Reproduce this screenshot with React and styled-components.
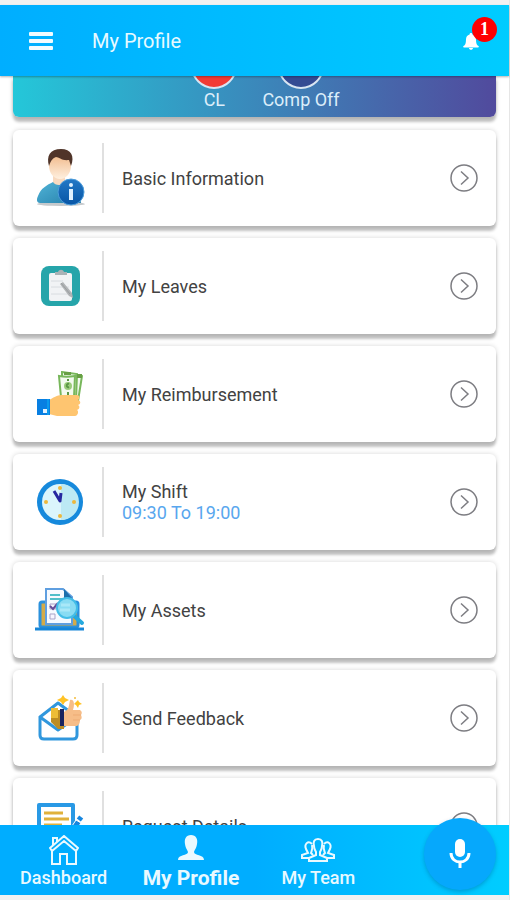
import React from "react";
import styled, { createGlobalStyle, css } from "styled-components";

const GlobalStyle = createGlobalStyle`
  *, *::before, *::after { box-sizing: border-box; }
  body {
    margin: 0;
    background: #f1f1f1;
    color: #424242;
    font-family: Roboto, "Liberation Sans", sans-serif;
  }
  button { font: inherit; color: inherit; border: 0; padding: 0; background: none; cursor: pointer; }
`;

const Screen = styled.div`
  display: flex;
  flex-direction: column;
  height: 100vh;
  padding: 5px 0;
  border-right: 1px solid #e6e6e6;
`;

const Header = styled.header`
  position: relative;
  z-index: 1;
  display: flex;
  align-items: center;
  flex: none;
  height: 71px;
  padding: 0 30px 0 28px;
  background: linear-gradient(90deg, #00aeff, #00ccff);
  box-shadow: 0 1px 2px rgba(0, 0, 0, 0.3);
  color: #e8faff;
`;

const IconButton = styled.button`
  position: relative;
  display: flex;
  svg { display: block; }
`;

const Title = styled.h1`
  flex: 1;
  margin: 0 0 0 38px;
  font-size: 20px;
  line-height: 24px;
  font-weight: 400;
`;

const Badge = styled.span`
  position: absolute;
  left: 9px;
  bottom: 8px;
  width: 25px;
  height: 25px;
  border-radius: 50%;
  background: #ff0000;
  color: #fff;
  font: bold 18px/24px "Liberation Serif", serif;
  text-align: center;
`;

const Content = styled.main`
  flex: 1;
  min-height: 0;
  overflow: hidden;
  padding: 0 13px;
  background: #fff;
`;

const cardShadow = css`
  box-shadow: 0 5px 3px rgba(0, 0, 0, 0.24), 0 0 5px rgba(0, 0, 0, 0.16);
`;

const BalanceCard = styled.section`
  display: flex;
  align-items: flex-end;
  justify-content: center;
  gap: 25px;
  height: 41px;
  margin-bottom: 13px;
  padding: 0 0 6px 22px;
  overflow: hidden;
  border-radius: 0 0 6px 6px;
  background: linear-gradient(90deg, #24c7d9, #514a9d);
  ${cardShadow}
`;

const Balance = styled.div`
  display: flex;
  flex-direction: column;
  align-items: center;
  flex: none;
  color: #dceefa;
  font-size: 18px;
  line-height: 22px;
`;

const BalanceDisc = styled.span`
  width: 46px;
  height: 46px;
  border: 2px solid #d9e5f2;
  border-radius: 50%;
  background: ${({ $tone }) => $tone};
`;

const BalanceLabel = styled.span`
  white-space: nowrap;
`;

const List = styled.ul`
  display: flex;
  flex-direction: column;
  gap: 12px;
  margin: 0;
  padding: 0;
  list-style: none;
`;

const RowCard = styled.button`
  display: flex;
  align-items: center;
  width: 100%;
  height: 96px;
  padding-right: 18px;
  border-radius: 6px;
  background: #fff;
  text-align: left;
  ${cardShadow}
`;

const RowIcon = styled.span`
  display: flex;
  justify-content: center;
  align-items: center;
  flex: none;
  width: 91px;
  height: 70px;
  padding-left: 4px;
  border-right: 2px solid #e0e0e0;
`;

const RowText = styled.span`
  flex: 1;
  padding-left: 18px;
  font-size: 18px;
  line-height: 21px;
`;

const RowDetail = styled.span`
  display: block;
  color: #58a6ee;
`;

const Footer = styled.footer`
  position: relative;
  display: flex;
  flex: none;
  height: 70px;
  padding-right: 127px;
  background: linear-gradient(90deg, #00adff 50%, #00cdff);
`;

const Nav = styled.nav`
  display: grid;
  grid-template-columns: repeat(3, 1fr);
  flex: 1;
`;

const NavLink = styled.a`
  display: flex;
  flex-direction: column;
  align-items: center;
  justify-content: flex-end;
  padding-bottom: 6px;
  color: #e9f9ff;
  font-size: ${({ $active }) => ($active ? 21 : 18)}px;
  font-weight: ${({ $active }) => ($active ? 700 : 500)};
  line-height: 22px;
  text-decoration: none;
  white-space: nowrap;
`;

const NavIcon = styled.span`
  display: flex;
  align-items: center;
  height: 34px;
`;

const MicButton = styled.button`
  position: absolute;
  right: 13px;
  bottom: 5px;
  display: flex;
  align-items: center;
  justify-content: center;
  width: 72px;
  height: 72px;
  border-radius: 50%;
  background: #06a8fc;
  box-shadow: 0 2px 4px rgba(0, 60, 120, 0.3);
  color: #fff;
`;

const MenuIcon = () => (
  <svg width="26" height="18" viewBox="0 0 26 18" fill="#f2fcff" aria-hidden="true">
    <rect x="1" y="0" width="24" height="4" rx="1" />
    <rect x="1" y="7" width="24" height="4" rx="1" />
    <rect x="1" y="14" width="24" height="4" rx="1" />
  </svg>
);

const BellIcon = () => (
  <svg width="16" height="19" viewBox="0 -2 16 19" fill="#fff" aria-hidden="true">
    <path d="M8 0c1 0 1.400.6 1.400 1.400C11.800 2 13 4 13 6.500c0 4 .8 5.500 2.500 6.500.5.300.4 1.500-.5 1.500H1c-.9 0-1-1.200-.5-1.500C2.200 12 3 10.500 3 6.500 3 4 4.200 2 6.600 1.400 6.600.6 7 0 8 0ZM6 15h4c0 2.400-4 2.400-4 0Z" />
  </svg>
);

const ChevronIcon = () => (
  <svg width="28" height="28" viewBox="0 0 28 28" fill="none" stroke="#7d7d82" strokeWidth="1.500" aria-hidden="true">
    <circle cx="14" cy="14" r="13" />
    <path d="m11 7.500 7 6.500-7 6.500" />
  </svg>
);

const PersonInfoIcon = () => (
  <svg width="50" height="58" viewBox="0 0 50 58" aria-hidden="true">
    <defs>
      <linearGradient id="shirt" x1="0" x2="1" y2="1"><stop stopColor="#55b9dc" /><stop offset="1" stopColor="#247ea9" /></linearGradient>
      <linearGradient id="info" y2="1" x2="0"><stop stopColor="#2378c6" /><stop offset="1" stopColor="#0755a5" /></linearGradient>
      <linearGradient id="face" y2="1" x2="0"><stop stopColor="#f1ba8b" /><stop offset="1" stopColor="#fff0df" /></linearGradient>
    </defs>
    <ellipse cx="26" cy="55" rx="24" ry="2" fill="#c5c9cc" />
    <path d="M18 28h12v6c5 2 12 4 14 11l2 9H5c-3 0-4-3-2-7 3-8 9-11 15-14Z" fill="url(#shirt)" />
    <path d="M18 25h12v8c-2 4-10 4-12 0Z" fill="#f8dac0" />
    <path d="M14 12c0-8 22-8 22 0v5c0 7-5 13-11 13s-11-6-11-13Z" fill="url(#face)" />
    <path d="M14 17c-3-10 1-17 12-17 10 0 14 7 10 17l-2-6c-7 1-10-3-13-3-3 1-5 3-7 9Z" fill="#503429" />
    <circle cx="36" cy="43" r="13" fill="url(#info)" stroke="#4d9ddb" strokeWidth="1" />
    <path d="M34 40h4v11h-4Z" fill="#dff1ff" />
    <circle cx="36" cy="36" r="2" fill="#dff1ff" />
  </svg>
);

const ClipboardIcon = () => (
  <svg width="40" height="40" viewBox="0 0 40 40" aria-hidden="true">
    <rect x="1" y="0" width="39" height="40" rx="8" fill="#26a5aa" />
    <rect x="9" y="7" width="23" height="28" rx="2" fill="#f1f3f5" />
    <path d="M15 9V6h3c1-3 5-3 6 0h3v3Z" fill="#a9b3b6" />
    <path d="M11 15h12M11 21h18M11 28h18" stroke="#d8dce0" />
    <path d="m20 18 3-2 9 11 1 5-4-2Z" fill="#b0b3b5" />
    <path d="m21 17 9 11" stroke="#9a9ea1" />
  </svg>
);

const MoneyHandIcon = () => (
  <svg width="46" height="46" viewBox="0 0 46 46" aria-hidden="true">
    <g stroke="#78b75b" strokeWidth="2" fill="#f3faef">
      <path d="m32 3 13 2-4 25H28Z" />
      <path d="m25 1 15 2-1 25H25Z" />
      <path d="M22 5c5 1 10 1 16 0l-1 21H24Z" />
    </g>
    <path d="M27 1h7v3h-7ZM40 3h5v4h-5Z" fill="#689f45" />
    <ellipse cx="31" cy="15" rx="4" ry="4" fill="#9bcc7b" />
    <path d="M32 13c-3-1-3 4 0 3M31 8v2M31 21v3" fill="none" stroke="#5b9745" strokeWidth="2" />
    <path d="M12 29c7-4 9-5 14-5h14c3 0 3 4 1 5 3 1 3 4 0 5 2 1 2 4-1 5 2 1 1 6-2 6H20l-8-2Z" fill="#fec570" />
    <path d="M0 28h13v16H0Z" fill="#087fe2" />
    <path d="M11 28v16" stroke="#0a9aed" strokeWidth="2" />
    <rect x="6" y="38" width="4" height="4" fill="#e2f2ff" />
  </svg>
);

const ClockIcon = () => (
  <svg width="48" height="48" viewBox="0 0 48 48" aria-hidden="true">
    <circle cx="24" cy="24" r="23" fill="#1689dc" />
    <circle cx="24" cy="24" r="18" fill="#dbf5fc" />
    <path d="M25 6a18 18 0 0 1 0 36Z" fill="#bce9f4" />
    <g fill="#edb83c"><circle cx="24" cy="10" r="2" /><circle cx="38" cy="24" r="2" /><circle cx="24" cy="38" r="2" /><circle cx="10" cy="24" r="2" /></g>
    <path d="m18 13 6 10 1-8" fill="none" stroke="#2627a0" strokeWidth="3" strokeLinejoin="round" />
  </svg>
);

const AssetsIcon = () => (
  <svg width="50" height="44" viewBox="0 0 50 44" aria-hidden="true">
    <rect x="5" y="14" width="38" height="25" rx="2" fill="#d3ab49" stroke="#2b91dd" strokeWidth="3" />
    <path d="M11 1h17l9 8v27H11Z" fill="#f6faff" stroke="#5f9fe0" strokeWidth="2" />
    <path d="M29 1v9h8Z" fill="#1c6fac" />
    <path d="M15 7h10M15 11h13" stroke="#50bfca" strokeWidth="2" />
    <path d="M15 16h6v5h-6ZM15 26h5v5h-5Z" fill="#f7f5ff" stroke="#a9a3c7" />
    <path d="m15 18 3 3 5-6" fill="none" stroke="#644b98" strokeWidth="2" />
    <path d="m38 27 9 8" stroke="#25a9de" strokeWidth="4" strokeLinecap="round" />
    <circle cx="32" cy="20" r="10" fill="#89dcf3" stroke="#43bde7" strokeWidth="2" />
    <path d="M26 17h9M25 22h10" stroke="#a9e8f8" strokeWidth="3" />
    <path d="M0 41h49" stroke="#1686d8" strokeWidth="3" />
  </svg>
);

const FeedbackIcon = () => (
  <svg width="44" height="46" viewBox="0 0 44 46" aria-hidden="true">
    <path d="M2 22v18q0 4 4 4h29q4 0 4-4V22L20 8 2 22l18 13 19-13" fill="#fff" stroke="#3097dd" strokeWidth="3" strokeLinejoin="round" />
    <path d="M13 15h13v19h-6l-7-7Z" fill="#bd8d23" />
    <path d="M13 13h7v10h-7Z" fill="#edbd36" />
    <path d="M22 14h4v17h-4Z" fill="#19245f" />
    <path d="M26 17c5-2 5-7 6-12 4-1 5 4 3 10h7q3 2 1 5c1 2 1 4-1 5 0 3-1 5-3 6H26Z" fill="#f6bd88" />
    <path d="M35 20h8M35 25h7" stroke="#edab75" />
    <path d="m25 0 2 3 4 2-4 2-2 3-2-3-4-2 4-2Zm15 5 1 2 3 2-3 1-1 3-2-3-2-1 2-2Z" fill="#ffc225" />
    <circle cx="37" cy="3" r="1" fill="#f3bd3c" />
  </svg>
);

const RequestIcon = () => (
  <svg width="48" height="46" viewBox="0 0 48 46" aria-hidden="true">
    <path d="M3 2h34v41H3Z" fill="#fff" stroke="#2999e5" strokeWidth="4" strokeLinejoin="round" />
    <path d="M8 10h19M8 16h25M8 22h18M8 28h20" stroke="#e0b13b" strokeWidth="3" />
    <path d="m40 17 5 3-13 19-5 2 1-6Z" fill="#1686df" stroke="#fff" />
    <path d="m42 14 4 3" stroke="#1686df" strokeWidth="4" />
  </svg>
);

const HomeIcon = () => (
  <svg width="30" height="31" viewBox="0 0 30 31" fill="none" stroke="#eaf9ff" strokeWidth="2" aria-hidden="true">
    <path d="M1 13 15 1l14 12-2 3L15 6 3 16ZM4 10V3h4v4M3 16v13h8V19h7v10h9V16" />
  </svg>
);

const ProfileIcon = () => (
  <svg width="26" height="30" viewBox="0 0 26 30" fill="#eaf9ff" aria-hidden="true">
    <path d="M13 0c5 0 7 4 6 9-.5 4-2 5-3 8 0 4 10 2 10 8H0c0-6 10-4 10-8-1-3-2.500-4-3-8C6 4 8 0 13 0Z" />
  </svg>
);

const TeamIcon = () => (
  <svg width="34" height="26" viewBox="0 0 34 26" fill="none" stroke="#eaf9ff" strokeWidth="2" aria-hidden="true">
    <path d="M17 2c4 0 5 3 4 7 0 3-1 4-2 6v3l7 3v3H8v-3l7-3v-3c-1-2-2-3-2-6-1-4 0-7 4-7Z" />
    <path d="M11 7C7 3 3 7 5 12l2 4-6 2v3h7M23 7c4-4 8 0 6 5l-2 4 6 2v3h-7M11 8c1 4 0 5-1 8l2 2M23 8c-1 4 0 5 1 8l-2 2" />
  </svg>
);

const MicIcon = () => (
  <svg width="22" height="30" viewBox="0 0 22 30" aria-hidden="true">
    <rect x="6" y="0" width="10" height="18" rx="5" fill="currentColor" />
    <path d="M2 14c0 12 18 12 18 0M11 23v6" fill="none" stroke="currentColor" strokeWidth="3" />
  </svg>
);

const rows = [
  { label: "Basic Information", Icon: PersonInfoIcon },
  { label: "My Leaves", Icon: ClipboardIcon },
  { label: "My Reimbursement", Icon: MoneyHandIcon },
  { label: "My Shift", detail: "09:30 To 19:00", Icon: ClockIcon },
  { label: "My Assets", Icon: AssetsIcon },
  { label: "Send Feedback", Icon: FeedbackIcon },
  { label: "Request Details", Icon: RequestIcon },
];

export default function App() {
  return (
    <>
      <GlobalStyle />
      <Screen>
        <Header>
          <IconButton type="button" aria-label="Menu"><MenuIcon /></IconButton>
          <Title>My Profile</Title>
          <IconButton type="button" aria-label="Notifications">
            <BellIcon />
            <Badge>1</Badge>
          </IconButton>
        </Header>
        <Content>
          <BalanceCard>
            <Balance><BalanceDisc $tone="#f23b35" /><BalanceLabel>CL</BalanceLabel></Balance>
            <Balance><BalanceDisc $tone="#344b93" /><BalanceLabel>Comp Off</BalanceLabel></Balance>
          </BalanceCard>
          <List>
            {rows.map(({ label, detail, Icon }) => (
              <li key={label}>
                <RowCard type="button">
                  <RowIcon><Icon /></RowIcon>
                  <RowText>{label}{detail && <RowDetail>{detail}</RowDetail>}</RowText>
                  <ChevronIcon />
                </RowCard>
              </li>
            ))}
          </List>
        </Content>
        <Footer>
          <Nav>
            <NavLink href="#dashboard"><NavIcon><HomeIcon /></NavIcon>Dashboard</NavLink>
            <NavLink href="#profile" $active aria-current="page"><NavIcon><ProfileIcon /></NavIcon>My Profile</NavLink>
            <NavLink href="#team"><NavIcon><TeamIcon /></NavIcon>My Team</NavLink>
          </Nav>
          <MicButton type="button" aria-label="Voice input"><MicIcon /></MicButton>
        </Footer>
      </Screen>
    </>
  );
}
